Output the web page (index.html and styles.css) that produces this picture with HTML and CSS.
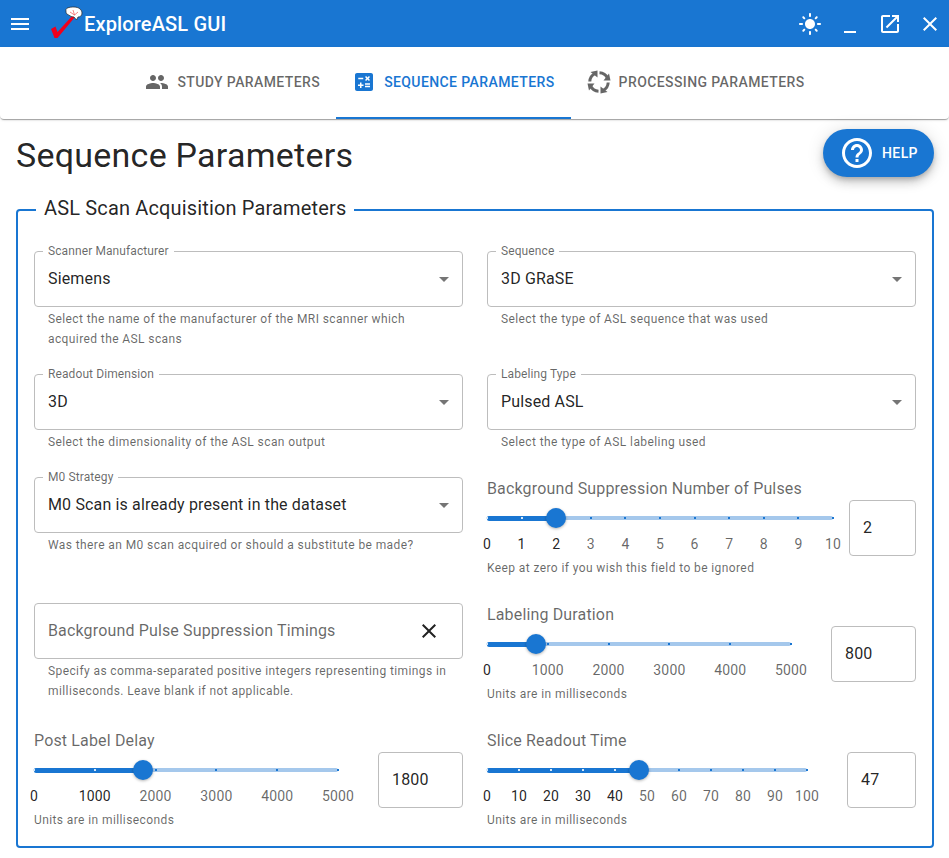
FILE: index.html
```html
<!DOCTYPE html>
<html lang="en">
<head>
<meta charset="utf-8">
<title>ExploreASL GUI</title>
<link rel="stylesheet" href="styles.css">
</head>
<body>
<header class="appbar">
  <svg class="icon menu" viewBox="0 0 24 24"><path d="M3 18h18v-2H3v2zm0-5h18v-2H3v2zm0-7v2h18V6H3z"/></svg>
  <svg class="logo" viewBox="0 0 34 34">
    <path d="M2 24 L6.500 21.500 L8.500 27 L24 10 L26 12 L8.500 33 L5.500 33 Z" fill="#f0001c"/>
    <path d="M17 6 C16 3 20 2 25 2 C30 2 33 5 33 8 C33 11 31 12 29 12 L27.500 15 L25 12 C22 12 20 10 18 9 C17 8.500 17 7 17 6 Z" fill="#fff" stroke="#222" stroke-width="0.7"/>
    <path d="M21 7 L25.500 10 M24 5 L25.500 10 M29 7 L25.500 10" stroke="#e33" stroke-width="0.6" fill="none"/>
  </svg>
  <span class="app-title">ExploreASL GUI</span>
  <span class="spacer"></span>
  <svg class="icon sun" viewBox="0 0 24 24"><path d="M12 7c-2.760 0-5 2.240-5 5s2.240 5 5 5 5-2.240 5-5-2.240-5-5-5zM2 13h2c.550 0 1-.450 1-1s-.450-1-1-1H2c-.550 0-1 .450-1 1s.450 1 1 1zm18 0h2c.550 0 1-.450 1-1s-.450-1-1-1h-2c-.550 0-1 .450-1 1s.450 1 1 1zM11 2v2c0 .550.450 1 1 1s1-.450 1-1V2c0-.550-.450-1-1-1s-1 .450-1 1zm0 18v2c0 .550.450 1 1 1s1-.450 1-1v-2c0-.550-.450-1-1-1s-1 .450-1 1zM5.990 4.580c-.390-.390-1.030-.390-1.410 0-.390.390-.390 1.030 0 1.410l1.060 1.060c.390.390 1.030.390 1.410 0s.390-1.030 0-1.410L5.990 4.580zm12.370 12.370c-.390-.390-1.030-.390-1.410 0-.390.390-.390 1.030 0 1.410l1.060 1.060c.390.390 1.030.390 1.410 0 .390-.390.390-1.030 0-1.410l-1.060-1.060zm1.060-10.960c.390-.390.390-1.030 0-1.410-.390-.390-1.030-.390-1.410 0l-1.060 1.060c-.390.390-.390 1.030 0 1.410s1.030.390 1.410 0l1.060-1.060zM7.050 18.360c.390-.390.390-1.030 0-1.410-.390-.390-1.030-.390-1.410 0l-1.060 1.060c-.390.390-.390 1.030 0 1.410s1.030.390 1.410 0l1.060-1.060z"/></svg>
  <svg class="icon minimize" viewBox="0 0 24 24"><path d="M6 19h12v2H6z"/></svg>
  <svg class="icon open" viewBox="0 0 24 24"><path d="M19 19H5V5h7V3H5c-1.110 0-2 .900-2 2v14c0 1.100.890 2 2 2h14c1.100 0 2-.900 2-2v-7h-2v7zM14 3v2h3.590l-9.830 9.830 1.410 1.410L19 6.410V10h2V3h-7z"/></svg>
  <svg class="icon close" viewBox="0 0 24 24"><path d="M19 6.410 17.590 5 12 10.590 6.410 5 5 6.410 10.590 12 5 17.590 6.410 19 12 13.410 17.590 19 19 17.590 13.410 12z"/></svg>
</header>

<nav class="tabs">
  <div class="tab">
    <svg class="tab-icon" viewBox="0 0 24 24"><path d="M16 11c1.660 0 2.990-1.340 2.990-3S17.660 5 16 5c-1.660 0-3 1.340-3 3s1.340 3 3 3zm-8 0c1.660 0 2.990-1.340 2.990-3S9.660 5 8 5C6.340 5 5 6.340 5 8s1.340 3 3 3zm0 2c-2.330 0-7 1.170-7 3.500V19h14v-2.500c0-2.330-4.670-3.500-7-3.500zm8 0c-.290 0-.620.020-.970.050 1.160.840 1.970 1.970 1.970 3.450V19h6v-2.500c0-2.330-4.670-3.500-7-3.500z"/></svg>
    <span>Study Parameters</span>
  </div>
  <div class="tab tab-active">
    <svg class="tab-icon" viewBox="0 0 24 24"><path d="M19 3H5c-1.100 0-2 .900-2 2v14c0 1.100.900 2 2 2h14c1.100 0 2-.900 2-2V5c0-1.100-.900-2-2-2zm-5.970 4.060L14.090 6l1.410 1.410L16.910 6l1.060 1.060-1.410 1.410 1.410 1.410-1.060 1.060-1.410-1.400-1.410 1.410-1.060-1.060 1.410-1.410-1.410-1.420zm-6.780.660h5v1.500h-5v-1.500zM11.500 16h-2v2H8v-2H6v-1.500h2v-2h1.500v2h2V16zm6.500 1.250h-5v-1.500h5v1.500zm0-2.500h-5v-1.500h5v1.500z"/></svg>
    <span>Sequence Parameters</span>
  </div>
  <div class="tab">
    <svg class="tab-icon" viewBox="0 0 24 24">
      <path class="cycle-arc" d="M12.500 2.800 A9.500 9.500 0 0 1 20.500 8"/>
      <path class="cycle-arc" d="M21.200 12.500 A9.500 9.500 0 0 1 16 20.500"/>
      <path class="cycle-arc" d="M11.500 21.200 A9.500 9.500 0 0 1 3.500 16"/>
      <path class="cycle-arc" d="M2.800 11.500 A9.500 9.500 0 0 1 8 3.500"/>
      <path d="M16.500 10.500 L23.500 10.500 L22 3.500 Z"/>
      <path d="M13.500 16.500 L13.500 23.500 L20.500 22 Z"/>
      <path d="M7.500 13.500 L0.500 13.500 L2 20.500 Z"/>
      <path d="M10.500 7.500 L10.500 0.500 L3.500 2 Z"/>
    </svg>
    <span>Processing Parameters</span>
  </div>
</nav>

<main class="page">
  <div class="page-head">
    <h1 class="page-title">Sequence Parameters</h1>
    <button class="help-btn" type="button">
      <svg class="help-icon" viewBox="0 0 24 24"><path d="M11 18h2v-2h-2v2zm1-16C6.480 2 2 6.480 2 12s4.480 10 10 10 10-4.480 10-10S17.520 2 12 2zm0 18c-4.410 0-8-3.590-8-8s3.590-8 8-8 8 3.590 8 8-3.590 8-8 8zm0-14c-2.210 0-4 1.790-4 4h2c0-1.100.900-2 2-2s2 .900 2 2c0 2-3 1.750-3 5h2c0-2.250 3-2.500 3-5 0-2.210-1.790-4-4-4z"/></svg>
      <span>Help</span>
    </button>
  </div>

  <fieldset class="group">
    <legend class="group-legend">ASL Scan Acquisition Parameters</legend>
    <div class="form-grid">

      <div class="field row-a">
        <div class="outlined"><span class="float-label">Scanner Manufacturer</span><span class="value">Siemens</span><span class="caret"></span></div>
        <p class="helper">Select the name of the manufacturer of the MRI scanner which acquired the ASL scans</p>
      </div>
      <div class="field row-a">
        <div class="outlined"><span class="float-label">Sequence</span><span class="value">3D GRaSE</span><span class="caret"></span></div>
        <p class="helper">Select the type of ASL sequence that was used</p>
      </div>

      <div class="field row-b">
        <div class="outlined"><span class="float-label">Readout Dimension</span><span class="value">3D</span><span class="caret"></span></div>
        <p class="helper">Select the dimensionality of the ASL scan output</p>
      </div>
      <div class="field row-b">
        <div class="outlined"><span class="float-label">Labeling Type</span><span class="value">Pulsed ASL</span><span class="caret"></span></div>
        <p class="helper">Select the type of ASL labeling used</p>
      </div>

      <div class="field row-c">
        <div class="outlined"><span class="float-label">M0 Strategy</span><span class="value">M0 Scan is already present in the dataset</span><span class="caret"></span></div>
        <p class="helper">Was there an M0 scan acquired or should a substitute be made?</p>
      </div>
      <div class="field row-c">
        <div class="slider-title">Background Suppression Number of Pulses</div>
        <div class="slider-row gap-small">
          <div class="slider">
            <div class="track"></div>
            <div class="track-fill" style="width:20%"></div>
            <i class="tick on" style="left:0%"></i><i class="tick on" style="left:10%"></i><i class="tick on" style="left:20%"></i><i class="tick" style="left:30%"></i><i class="tick" style="left:40%"></i><i class="tick" style="left:50%"></i><i class="tick" style="left:60%"></i><i class="tick" style="left:70%"></i><i class="tick" style="left:80%"></i><i class="tick" style="left:90%"></i><i class="tick" style="left:100%"></i>
            <div class="thumb" style="left:20%"></div>
            <span class="mark on" style="left:0%">0</span><span class="mark on" style="left:10%">1</span><span class="mark on" style="left:20%">2</span><span class="mark" style="left:30%">3</span><span class="mark" style="left:40%">4</span><span class="mark" style="left:50%">5</span><span class="mark" style="left:60%">6</span><span class="mark" style="left:70%">7</span><span class="mark" style="left:80%">8</span><span class="mark" style="left:90%">9</span><span class="mark" style="left:100%">10</span>
          </div>
          <div class="num-box w67">2</div>
        </div>
        <p class="helper helper-slider">Keep at zero if you wish this field to be ignored</p>
      </div>

      <div class="field row-d">
        <div class="outlined"><span class="placeholder">Background Pulse Suppression Timings</span>
          <svg class="clear" viewBox="0 0 24 24"><path d="M19 6.410 17.590 5 12 10.590 6.410 5 5 6.410 10.590 12 5 17.590 6.410 19 12 13.410 17.590 19 19 17.590 13.410 12z"/></svg>
        </div>
        <p class="helper">Specify as comma-separated positive integers representing timings in milliseconds. Leave blank if not applicable.</p>
      </div>
      <div class="field row-d">
        <div class="slider-title">Labeling Duration</div>
        <div class="slider-row">
          <div class="slider">
            <div class="track"></div>
            <div class="track-fill" style="width:16%"></div>
            <i class="tick on" style="left:0%"></i><i class="tick" style="left:20%"></i><i class="tick" style="left:40%"></i><i class="tick" style="left:60%"></i><i class="tick" style="left:80%"></i><i class="tick" style="left:100%"></i>
            <div class="thumb" style="left:16%"></div>
            <span class="mark on" style="left:0%">0</span><span class="mark" style="left:20%">1000</span><span class="mark" style="left:40%">2000</span><span class="mark" style="left:60%">3000</span><span class="mark" style="left:80%">4000</span><span class="mark" style="left:100%">5000</span>
          </div>
          <div class="num-box w85">800</div>
        </div>
        <p class="helper helper-slider">Units are in milliseconds</p>
      </div>

      <div class="field">
        <div class="slider-title">Post Label Delay</div>
        <div class="slider-row">
          <div class="slider">
            <div class="track"></div>
            <div class="track-fill" style="width:36%"></div>
            <i class="tick on" style="left:0%"></i><i class="tick on" style="left:20%"></i><i class="tick" style="left:40%"></i><i class="tick" style="left:60%"></i><i class="tick" style="left:80%"></i><i class="tick" style="left:100%"></i>
            <div class="thumb" style="left:36%"></div>
            <span class="mark on" style="left:0%">0</span><span class="mark on" style="left:20%">1000</span><span class="mark" style="left:40%">2000</span><span class="mark" style="left:60%">3000</span><span class="mark" style="left:80%">4000</span><span class="mark" style="left:100%">5000</span>
          </div>
          <div class="num-box w85">1800</div>
        </div>
        <p class="helper helper-slider">Units are in milliseconds</p>
      </div>
      <div class="field">
        <div class="slider-title">Slice Readout Time</div>
        <div class="slider-row">
          <div class="slider">
            <div class="track"></div>
            <div class="track-fill" style="width:47.4%"></div>
            <i class="tick on" style="left:0%"></i><i class="tick on" style="left:10%"></i><i class="tick on" style="left:20%"></i><i class="tick on" style="left:30%"></i><i class="tick on" style="left:40%"></i><i class="tick" style="left:50%"></i><i class="tick" style="left:60%"></i><i class="tick" style="left:70%"></i><i class="tick" style="left:80%"></i><i class="tick" style="left:90%"></i><i class="tick" style="left:100%"></i>
            <div class="thumb" style="left:47.4%"></div>
            <span class="mark on" style="left:0%">0</span><span class="mark on" style="left:10%">10</span><span class="mark on" style="left:20%">20</span><span class="mark on" style="left:30%">30</span><span class="mark on" style="left:40%">40</span><span class="mark" style="left:50%">50</span><span class="mark" style="left:60%">60</span><span class="mark" style="left:70%">70</span><span class="mark" style="left:80%">80</span><span class="mark" style="left:90%">90</span><span class="mark" style="left:100%">100</span>
          </div>
          <div class="num-box w69">47</div>
        </div>
        <p class="helper helper-slider">Units are in milliseconds</p>
      </div>

    </div>
  </fieldset>
</main>
</body>
</html>
```
FILE: styles.css
```css
* { box-sizing: border-box; }
html, body { margin: 0; padding: 0; }
body {
  width: 949px;
  height: 858px;
  overflow: hidden;
  background: #fff;
  color: rgba(0,0,0,.87);
  font-family: Roboto, "Liberation Sans", sans-serif;
}

.appbar {
  height: 47px;
  background: #1976d2;
  display: flex;
  align-items: center;
  padding-left: 8px;
  padding-right: 7px;
  color: #fff;
}
.icon { width: 24px; height: 24px; fill: #fff; flex: none; }
.logo { width: 34px; height: 34px; flex: none; margin-left: 17px; margin-top: -3px; }
.app-title { font-size: 20px; font-weight: 500; margin-left: 1px; line-height: 1; letter-spacing: .15px; }
.spacer { flex: 1; }
.sun { margin-right: 16px; }
.minimize { margin-right: 16px; }
.open { margin-right: 16px; }

.tabs {
  height: 72px;
  background: #fff;
  display: flex;
  justify-content: center;
  border-radius: 0 0 4px 4px;
  box-shadow: 0 2px 1px -1px rgba(0,0,0,.2), 0 1px 1px 0 rgba(0,0,0,.14), 0 1px 3px 0 rgba(0,0,0,.12);
  padding-left: 1px;
}
.tab {
  height: 72px;
  padding: 0 16px;
  display: flex;
  align-items: center;
  gap: 8px;
  color: rgba(0,0,0,.6);
  font-size: 14px;
  font-weight: 500;
  letter-spacing: .4px;
  text-transform: uppercase;
  border-bottom: 2px solid transparent;
}
.tab-icon { width: 24px; height: 24px; fill: #666; flex: none; }
.cycle-arc { fill: none; stroke: #666; stroke-width: 3; }
.tab-active { color: #1976d2; border-bottom-color: #1976d2; }
.tab-active .tab-icon { fill: #1976d2; }

.page { padding: 0 15px 0 16px; }
.page-head {
  display: flex;
  justify-content: space-between;
  align-items: flex-start;
  height: 77px;
  padding-top: 10px;
}
.page-title {
  margin: 0;
  font-size: 34px;
  font-weight: 400;
  line-height: 52px;
  letter-spacing: .25px;
}
.help-btn {
  width: 111px;
  height: 48px;
  border: 0;
  border-radius: 24px;
  background: #1976d2;
  color: #fff;
  display: flex;
  align-items: center;
  justify-content: flex-start;
  gap: 7px;
  padding: 0 0 0 16px;
  font: 500 14px Roboto, sans-serif;
  letter-spacing: .4px;
  text-transform: uppercase;
  box-shadow: 0 3px 5px -1px rgba(0,0,0,.2), 0 6px 10px 0 rgba(0,0,0,.14), 0 1px 18px 0 rgba(0,0,0,.12);
}
.help-icon { width: 36px; height: 36px; fill: #fff; flex: none; }

.group {
  margin: 0;
  padding: 27px 16px 0 16px;
  border: 2px solid #1976d2;
  border-radius: 4px;
  height: 652px;
  min-width: 0;
}
.group-legend {
  font-size: 20px;
  line-height: 24px;
  padding: 0 8px 4px;
  margin-left: 2px;
  letter-spacing: .15px;
}
.form-grid {
  display: grid;
  grid-template-columns: 429px 429px;
  column-gap: 24px;
}
.field { min-width: 0; }
.row-a { height: 123px; }
.row-b { height: 103px; }
.row-c { height: 126px; }
.row-d { height: 126px; }

.outlined {
  position: relative;
  height: 56px;
  border: 1px solid #bdbdbd;
  border-radius: 4px;
  display: flex;
  align-items: center;
  padding: 0 13px 2px;
  font-size: 16px;
}
.float-label {
  position: absolute;
  left: 8px;
  top: -8px;
  padding: 0 5px;
  background: #fff;
  font-size: 12px;
  line-height: 14px;
  letter-spacing: .1px;
  color: rgba(0,0,0,.6);
}
.value { letter-spacing: .15px; }
.placeholder { color: rgba(0,0,0,.6); letter-spacing: .15px; }
.caret {
  position: absolute;
  right: 13px;
  top: 25px;
  width: 0;
  height: 0;
  border-left: 5px solid transparent;
  border-right: 5px solid transparent;
  border-top: 5px solid #757575;
}
.clear {
  position: absolute;
  right: 21px;
  top: 15px;
  width: 24px;
  height: 24px;
  fill: #222;
}
.helper {
  margin: 2px 14px 0;
  font-size: 12px;
  line-height: 20px;
  letter-spacing: .4px;
  color: rgba(0,0,0,.6);
}
.helper-slider { margin: 2px 0 0; }

.slider-title {
  font-size: 16px;
  line-height: 24px;
  color: rgba(0,0,0,.6);
  letter-spacing: .15px;
}
.slider-row {
  display: flex;
  align-items: flex-start;
  gap: 40px;
  margin-top: -1px;
}
.gap-small { gap: 16px; }
.slider {
  position: relative;
  flex: 1;
  height: 56px;
}
.track, .track-fill {
  position: absolute;
  left: 0;
  top: 16px;
  height: 4px;
  border-radius: 2px;
}
.track { width: 100%; background: #a5c8ec; }
.track-fill { background: #1976d2; top: 15.500px; height: 5px; }
.tick {
  position: absolute;
  top: 17px;
  width: 2px;
  height: 2px;
  margin-left: -1px;
  background: #1976d2;
}
.tick.on { background: #d8e8f7; }
.thumb {
  position: absolute;
  top: 8px;
  width: 20px;
  height: 20px;
  margin-left: -10px;
  border-radius: 50%;
  background: #1976d2;
  box-shadow: 0 1px 3px rgba(0,0,0,.3);
}
.mark {
  position: absolute;
  top: 34px;
  transform: translateX(-50%);
  font-size: 14px;
  line-height: 20px;
  letter-spacing: .15px;
  color: rgba(0,0,0,.6);
}
.mark.on { color: rgba(0,0,0,.87); }
.num-box {
  flex: none;
  height: 56px;
  border: 1px solid #bdbdbd;
  border-radius: 4px;
  display: flex;
  align-items: center;
  padding: 0 13px 2px;
  font-size: 16px;
  letter-spacing: .15px;
}
.w67 { width: 67px; }
.w69 { width: 69px; }
.w85 { width: 85px; }
```
